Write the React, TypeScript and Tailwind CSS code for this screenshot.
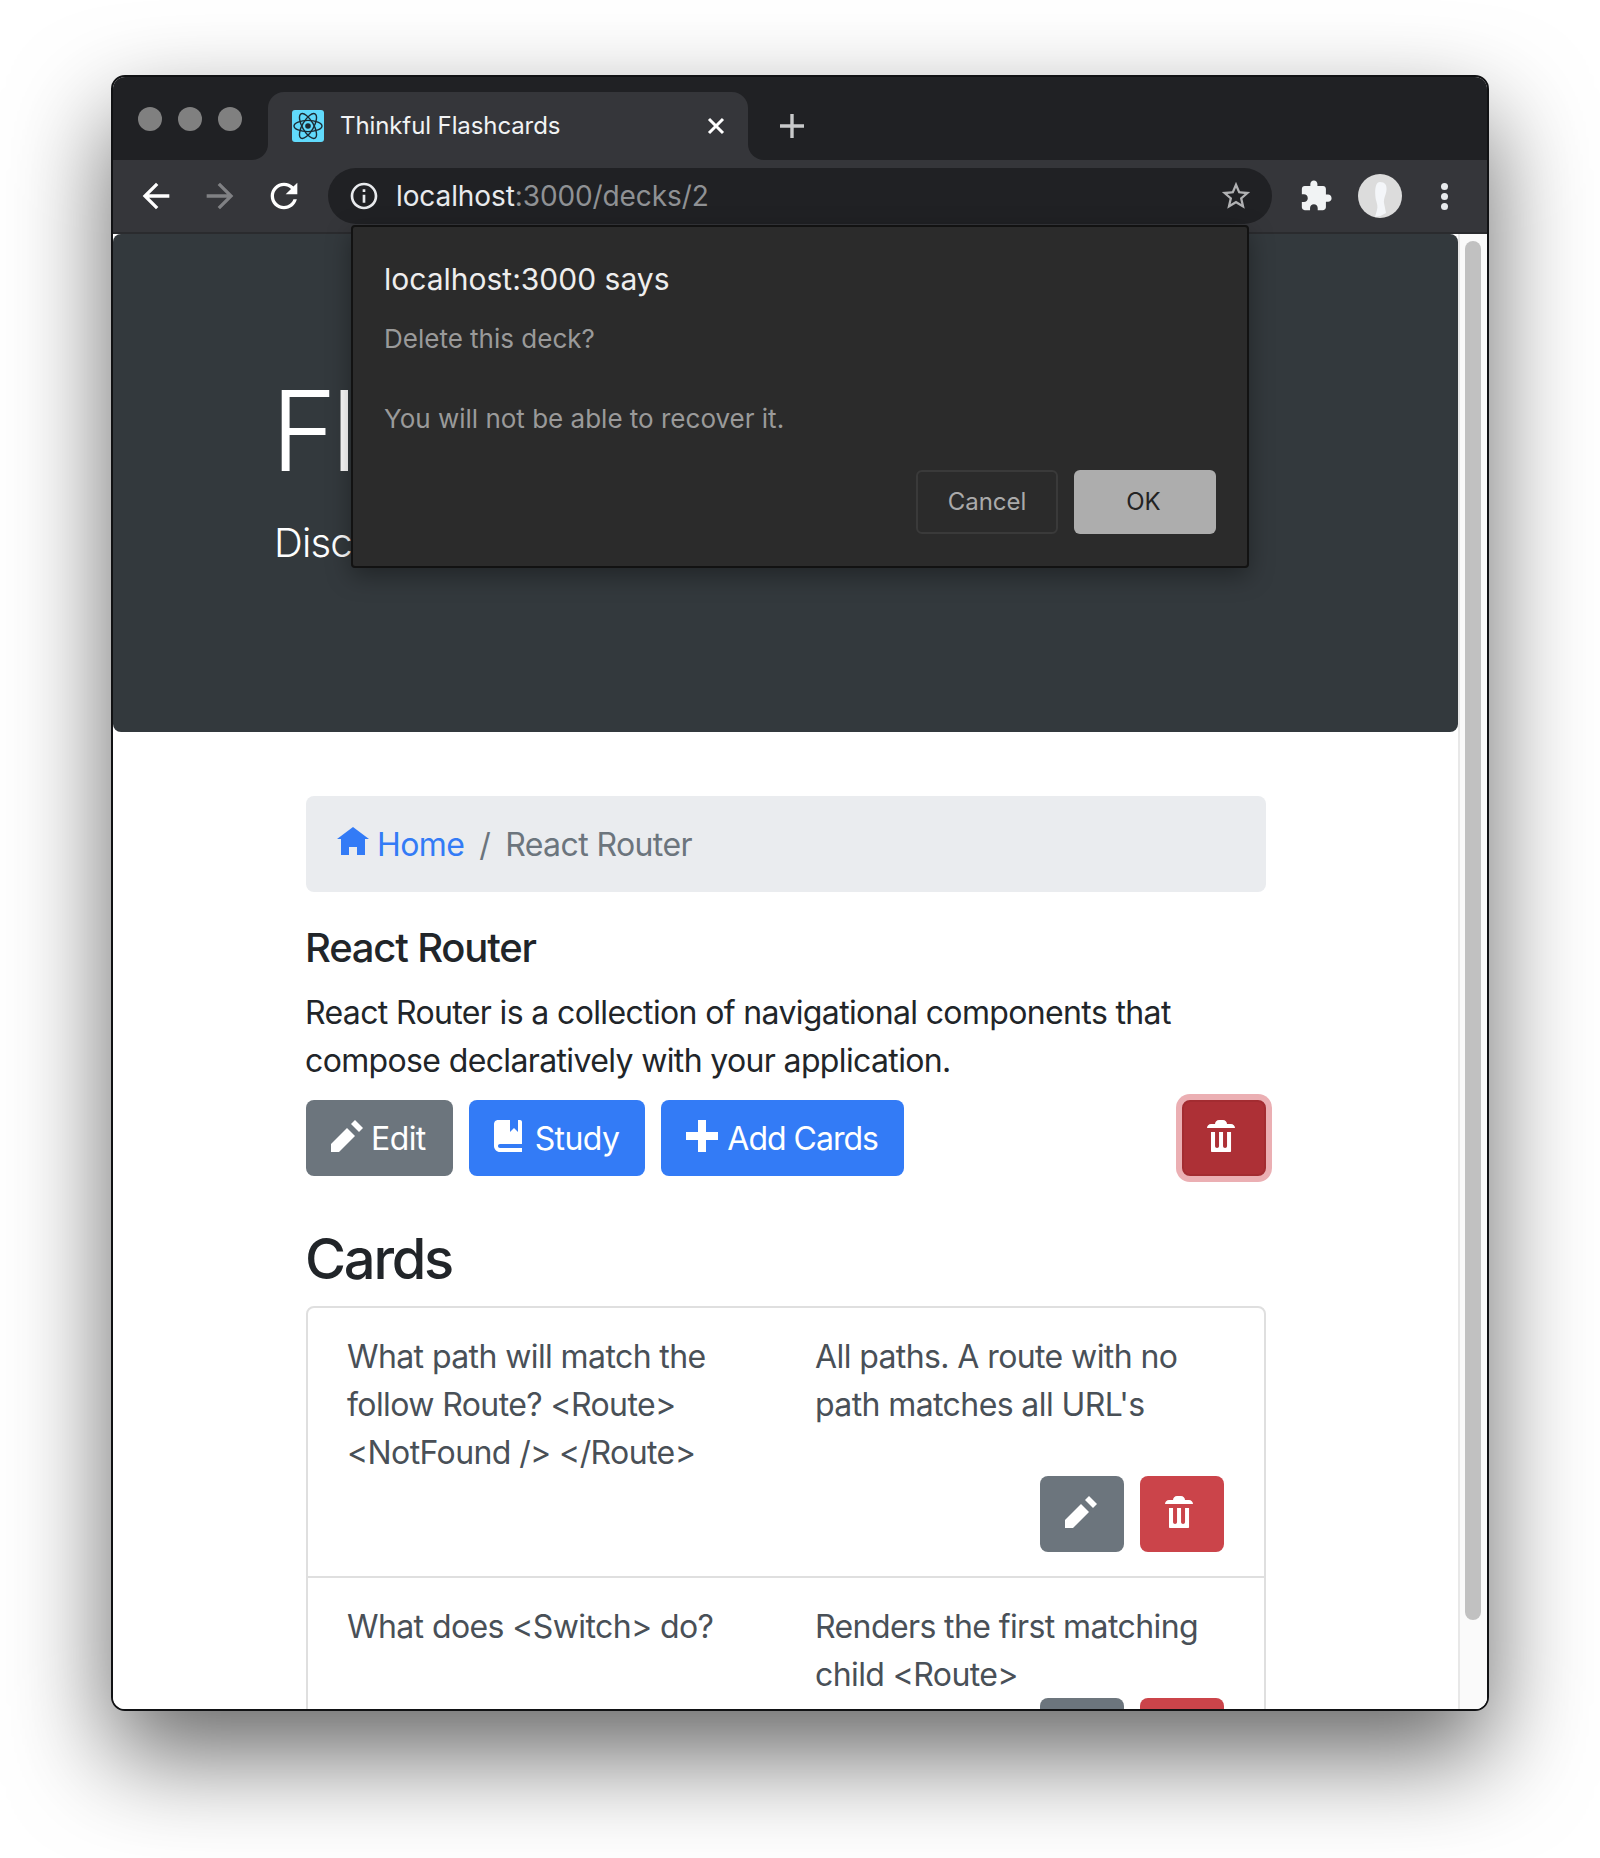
import React from "react";

const Oi = ({ d, className = "" }: { d: string; className?: string }) => (
  <svg viewBox="0 0 8 8" className={"w-[32px] h-[32px] shrink-0 fill-current " + className}>
    <path d={d} />
  </svg>
);
const M = ({ d, className = "" }: { d: string; className?: string }) => (
  <svg viewBox="0 0 24 24" className={"shrink-0 fill-current " + className}>
    <path d={d} />
  </svg>
);

const home = "M4 0l-4 3h1v4h2v-2h2v2h2v-4.03l1 .03-4-3z";
const pencil = "M6 0l-1 1 2 2 1-1-2-2zm-2 2l-4 4v2h2l4-4-2-2z";
const plus = "M3 0v3h-3v2h3v3h2v-3h3v-2h-3v-3h-2z";
const trash =
  "M3 0c-.55 0-1 .45-1 1h-1c-.55 0-1 .45-1 1h7c0-.55-.45-1-1-1h-1c0-.55-.45-1-1-1h-1zm-2 3v4.81c0 .11.08.19.19.19h4.63c.11 0 .19-.08.19-.19v-4.81h-1v3.5c0 .28-.22.5-.5.5s-.5-.22-.5-.5v-3.5h-1v3.5c0 .28-.22.5-.5.5s-.5-.22-.5-.5v-3.5h-1z";
const book =
  "M1 0c-.07 0-.13.01-.19.03-.39.08-.7.39-.78.78-.03.06-.03.12-.03.19v5.5c0 .83.67 1.5 1.5 1.5h5.5v-1h-5.5c-.28 0-.5-.22-.5-.5s.22-.5.5-.5h5.5v-5.5c0-.28-.22-.5-.5-.5h-.5v3l-1-1-1 1v-3h-3z";

const Atom = () => (
  <svg viewBox="0 0 32 32" className="w-[32px] h-[32px] rounded-[3px] bg-[#61dafb]">
    <g fill="none" stroke="#1c2b33" strokeWidth="1.4">
      <ellipse cx="16" cy="16" rx="14" ry="5.6" />
      <ellipse cx="16" cy="16" rx="14" ry="5.6" transform="rotate(60 16 16)" />
      <ellipse cx="16" cy="16" rx="14" ry="5.6" transform="rotate(120 16 16)" />
    </g>
    <circle cx="16" cy="16" r="2.8" fill="#1c2b33" />
  </svg>
);

const CardRow = ({ front, back, last }: { front: string; back: string; last?: boolean }) => (
  <div className={"px-[39px] pt-[25px] pb-[24px] " + (last ? "" : "border-b-2 border-[#dfdfdf]")}>
    <div className="grid grid-cols-[468px_410px] text-[32px] leading-[48px] tracking-[-0.6px] text-[#495057]">
      <p className="pr-[28px]">{front}</p>
      <p>{back}</p>
    </div>
    <div className="flex justify-end gap-[16px] mt-[-1px] mr-[1px]">
      <button className="w-[84px] h-[76px] pl-[25px] pt-[20px] rounded-[8px] bg-[#6c757d] text-white flex items-start">
        <Oi d={pencil} />
      </button>
      <button className="w-[84px] h-[76px] pl-[25px] pt-[20px] rounded-[8px] bg-[#cb444a] text-white flex items-start">
        <Oi d={trash} />
      </button>
    </div>
  </div>
);

export default function App() {
  return (
    <div className="w-[1600px] h-[1858px] bg-white pt-[75px] pl-[111px] overflow-hidden [font-family:Inter,sans-serif]">
      <div className="relative w-[1378px] h-[1636px] rounded-[14px] overflow-hidden border-2 border-[#111214] shadow-[0_44px_100px_rgba(0,0,0,0.6)] flex flex-col bg-white">
        {/* tab strip */}
        <div className="h-[83px] shrink-0 bg-[#202124] flex items-end relative">
          <div className="w-[155px] h-[83px] shrink-0 flex items-start gap-[16px] pl-[25px] pt-[30px]">
            <span className="w-[24px] h-[24px] rounded-full bg-[#808080]" />
            <span className="w-[24px] h-[24px] rounded-full bg-[#808080]" />
            <span className="w-[24px] h-[24px] rounded-full bg-[#808080]" />
          </div>
          <div className="relative w-[480px] h-[68px] rounded-t-[16px] bg-[#35363a] flex items-center pl-[24px] pr-[22px] text-white">
            <span className="absolute left-[-16px] bottom-0 w-[16px] h-[16px] bg-[#35363a]">
              <span className="block w-full h-full bg-[#202124] rounded-br-[16px]" />
            </span>
            <span className="absolute right-[-16px] bottom-0 w-[16px] h-[16px] bg-[#35363a]">
              <span className="block w-full h-full bg-[#202124] rounded-bl-[16px]" />
            </span>
            <Atom />
            <span className="ml-[16px] flex-1 text-[24px] leading-[32px] tracking-[-0.1px] text-[#f1f3f4]">Thinkful Flashcards</span>
            <svg viewBox="0 0 18 18" className="w-[18px] h-[18px] mr-[1px]" stroke="#fff" strokeWidth="3" fill="none">
              <path d="M2 2l14 14M16 2L2 16" />
            </svg>
          </div>
          <svg viewBox="0 0 26 26" className="absolute left-[666px] top-[36px] w-[26px] h-[26px]" stroke="#c8c9ca" strokeWidth="3.4" fill="none">
            <path d="M13 1v24M1 13h24" />
          </svg>
        </div>

        {/* toolbar */}
        <div className="h-[74px] shrink-0 bg-[#35363a] border-b-2 border-[#2a2b2e] flex items-start relative">
          <div className="flex items-center h-[72px] pl-[23px] gap-[24px] text-white">
            <M className="w-[40px] h-[40px]" d="M20 11H7.83l5.59-5.59L12 4l-8 8 8 8 1.41-1.41L7.83 13H20v-2z" />
            <M className="w-[40px] h-[40px] text-[#808184]" d="M12 4l-1.41 1.41L16.17 11H4v2h12.17l-5.58 5.59L12 20l8-8-8-8z" />
            <M className="w-[40px] h-[40px]" d="M17.65 6.35C16.2 4.9 14.21 4 12 4c-4.42 0-7.99 3.58-7.99 8s3.57 8 7.99 8c3.73 0 6.84-2.55 7.73-6h-2.08c-.82 2.33-3.04 4-5.65 4-3.31 0-6-2.69-6-6s2.69-6 6-6c1.66 0 3.14.69 4.22 1.78L13 11h7V4l-2.35 2.35z" />
          </div>
          <div className="ml-[24px] mt-[8px] w-[944px] h-[56px] rounded-full bg-[#202124] flex items-center pl-[20px] pr-[19px]">
            <M className="w-[32px] h-[32px] text-[#e8eaed]" d="M11 7h2v2h-2zm0 4h2v6h-2zm1-9C6.48 2 2 6.48 2 12s4.48 10 10 10 10-4.48 10-10S17.52 2 12 2zm0 18c-4.41 0-8-3.59-8-8s3.59-8 8-8 8 3.59 8 8-3.59 8-8 8z" />
            <span className="ml-[16px] flex-1 text-[28px] leading-[36px] tracking-[-0.1px] text-[#e8eaed]">
              localhost<span className="text-[#8f9194]">:3000/decks/2</span>
            </span>
            <M className="w-[34px] h-[34px] text-[#b0b1b3]" d="M22 9.24l-7.19-.62L12 2 9.19 8.63 2 9.24l5.46 4.73L5.82 21 12 17.27 18.18 21l-1.63-7.03L22 9.24zM12 15.4l-3.76 2.27 1-4.28-3.32-2.88 4.38-.38L12 6.1l1.71 4.04 4.38.38-3.32 2.88 1 4.28L12 15.4z" />
          </div>
          <div className="flex items-center h-[72px] ml-[27px] text-[#f1f3f4]">
            <M className="w-[34px] h-[34px]" d="M20.5 11H19V7c0-1.1-.9-2-2-2h-4V3.5C13 2.12 11.88 1 10.5 1S8 2.12 8 3.5V5H4c-1.1 0-1.99.9-1.99 2v3.8H3.5c1.49 0 2.7 1.21 2.7 2.7s-1.21 2.7-2.7 2.7H2V20c0 1.1.9 2 2 2h3.8v-1.5c0-1.49 1.21-2.7 2.7-2.7 1.49 0 2.7 1.21 2.7 2.7V22H17c1.1 0 2-.9 2-2v-4h1.5c1.38 0 2.5-1.12 2.5-2.5S21.88 11 20.5 11z" />
            <svg viewBox="0 0 44 44" className="w-[44px] h-[44px] ml-[25px]">
              <circle cx="22" cy="22" r="22" fill="#dcdcdc" />
              <path d="M22 8c5 0 7 3 6.5 8-.5 5-3 8-2.5 13l2 10a22 22 0 0 1-11 4l2-7c1-4 0-6-1-10-1-5-2-18 4-18z" fill="#f4f6f9" />
            </svg>
            <span className="ml-[39px] flex flex-col gap-[3px] items-center">
              <span className="w-[7px] h-[7px] rounded-full bg-[#e8eaed]" />
              <span className="w-[7px] h-[7px] rounded-full bg-[#e8eaed]" />
              <span className="w-[7px] h-[7px] rounded-full bg-[#e8eaed]" />
            </span>
          </div>
        </div>

        {/* page */}
        <div className="flex-1 min-h-0 flex bg-white">
          <main className="flex-1 min-w-0 overflow-hidden">
            <div className="h-[498px] rounded-[8px] bg-[#33393d] pt-[129px] text-white overflow-hidden">
              <h1 className="pl-[158px] text-[112px] leading-[134px] font-light tracking-[-0.05em] whitespace-nowrap">Flashcard-o-matic</h1>
              <p className="pl-[161px] mt-[16px] text-[40px] leading-[60px] font-light tracking-[-0.02em] whitespace-nowrap">Discover the flashcard difference.</p>
            </div>
            <div className="ml-[193px] w-[960px] pt-[64px]">
              <nav className="h-[96px] rounded-[8px] bg-[#eaecef] pl-[31px] pt-[2px] flex items-center text-[32px] leading-[48px] tracking-[-0.6px] text-[#6c757d]">
                <Oi d={home} className="text-[#337bf6] mb-[4px]" />
                <span className="ml-[8px] text-[#337bf6]">Home</span>
                <span className="ml-[15px] mr-[15px]">/</span>
                <span>React Router</span>
              </nav>
              <h3 className="mt-[32px] -ml-[1px] text-[40px] leading-[48px] font-medium tracking-[-0.03em] text-[#212529]">React Router</h3>
              <p className="mt-[17px] -ml-[1px] text-[32px] leading-[48px] tracking-[-0.64px] text-[#212529]">
                React Router is a collection of navigational components that compose declaratively with your application.
              </p>
              <div className="mt-[15px] flex items-center gap-[16px] text-[32px] leading-[48px] tracking-[-0.6px] text-white">
                <button className="h-[76px] pl-[25px] pr-[27px] pt-[2px] rounded-[8px] bg-[#6c757d] flex items-center gap-[8px]">
                  <Oi d={pencil} className="mb-[6px]" />
                  Edit
                </button>
                <button className="h-[76px] pl-[25px] pr-[26px] pt-[2px] rounded-[8px] bg-[#337bf6] flex items-center gap-[9px]">
                  <Oi d={book} className="mb-[6px]" />
                  Study
                </button>
                <button className="h-[76px] pl-[25px] pr-[26px] pt-[2px] rounded-[8px] bg-[#337bf6] flex items-center gap-[9px] tracking-[-1px]">
                  <Oi d={plus} className="mb-[6px]" />
                  Add Cards
                </button>
                <button className="ml-auto w-[84px] h-[76px] pl-[23px] rounded-[8px] bg-[#ad3036] border-2 border-[#a32c31] shadow-[0_0_0_6px_#ebafb3] flex items-center">
                  <Oi d={trash} className="mb-[4px]" />
                </button>
              </div>
              <h2 className="mt-[49px] -ml-[1px] text-[56px] leading-[68px] font-medium tracking-[-0.04em] text-[#212529]">Cards</h2>
              <div className="mt-[13px] rounded-[8px] border-2 border-[#dfdfdf]">
                <CardRow front="What path will match the follow Route? <Route> <NotFound /> </Route>" back="All paths. A route with no path matches all URL's" />
                <CardRow last front="What does <Switch> do?" back="Renders the first matching child <Route>" />
              </div>
            </div>
          </main>
          <aside className="w-[29px] shrink-0 bg-[#fafafa] border-l-2 border-[#e8e8e8] pt-[7px] pl-[5px]">
            <div className="w-[16px] h-[1379px] rounded-full bg-[#c1c1c1]" />
          </aside>
        </div>

        {/* alert dialog */}
        <div className="absolute left-[238px] top-[148px] w-[898px] h-[343px] rounded-[4px] bg-[#2b2b2b] border-2 border-[#121212] shadow-[0_8px_24px_rgba(0,0,0,0.35)] pl-[31px] pr-[31px] pt-[32px]">
          <p className="text-[30px] leading-[40px] text-[#eeeeee]">localhost:3000 says</p>
          <p className="mt-[20px] text-[26px] leading-[39px] text-[#9a9a9a]">Delete this deck?</p>
          <p className="mt-[41px] text-[26px] leading-[39px] text-[#9a9a9a]">You will not be able to recover it.</p>
          <div className="mt-[32px] flex justify-end gap-[16px] text-[24px]">
            <button className="w-[142px] h-[64px] rounded-[6px] border-2 border-[#3a3a3a] text-[#aaaaaa]">Cancel</button>
            <button className="w-[142px] h-[64px] pr-[3px] rounded-[6px] bg-[#adadad] text-[#232323]">OK</button>
          </div>
        </div>
      </div>
    </div>
  );
}
